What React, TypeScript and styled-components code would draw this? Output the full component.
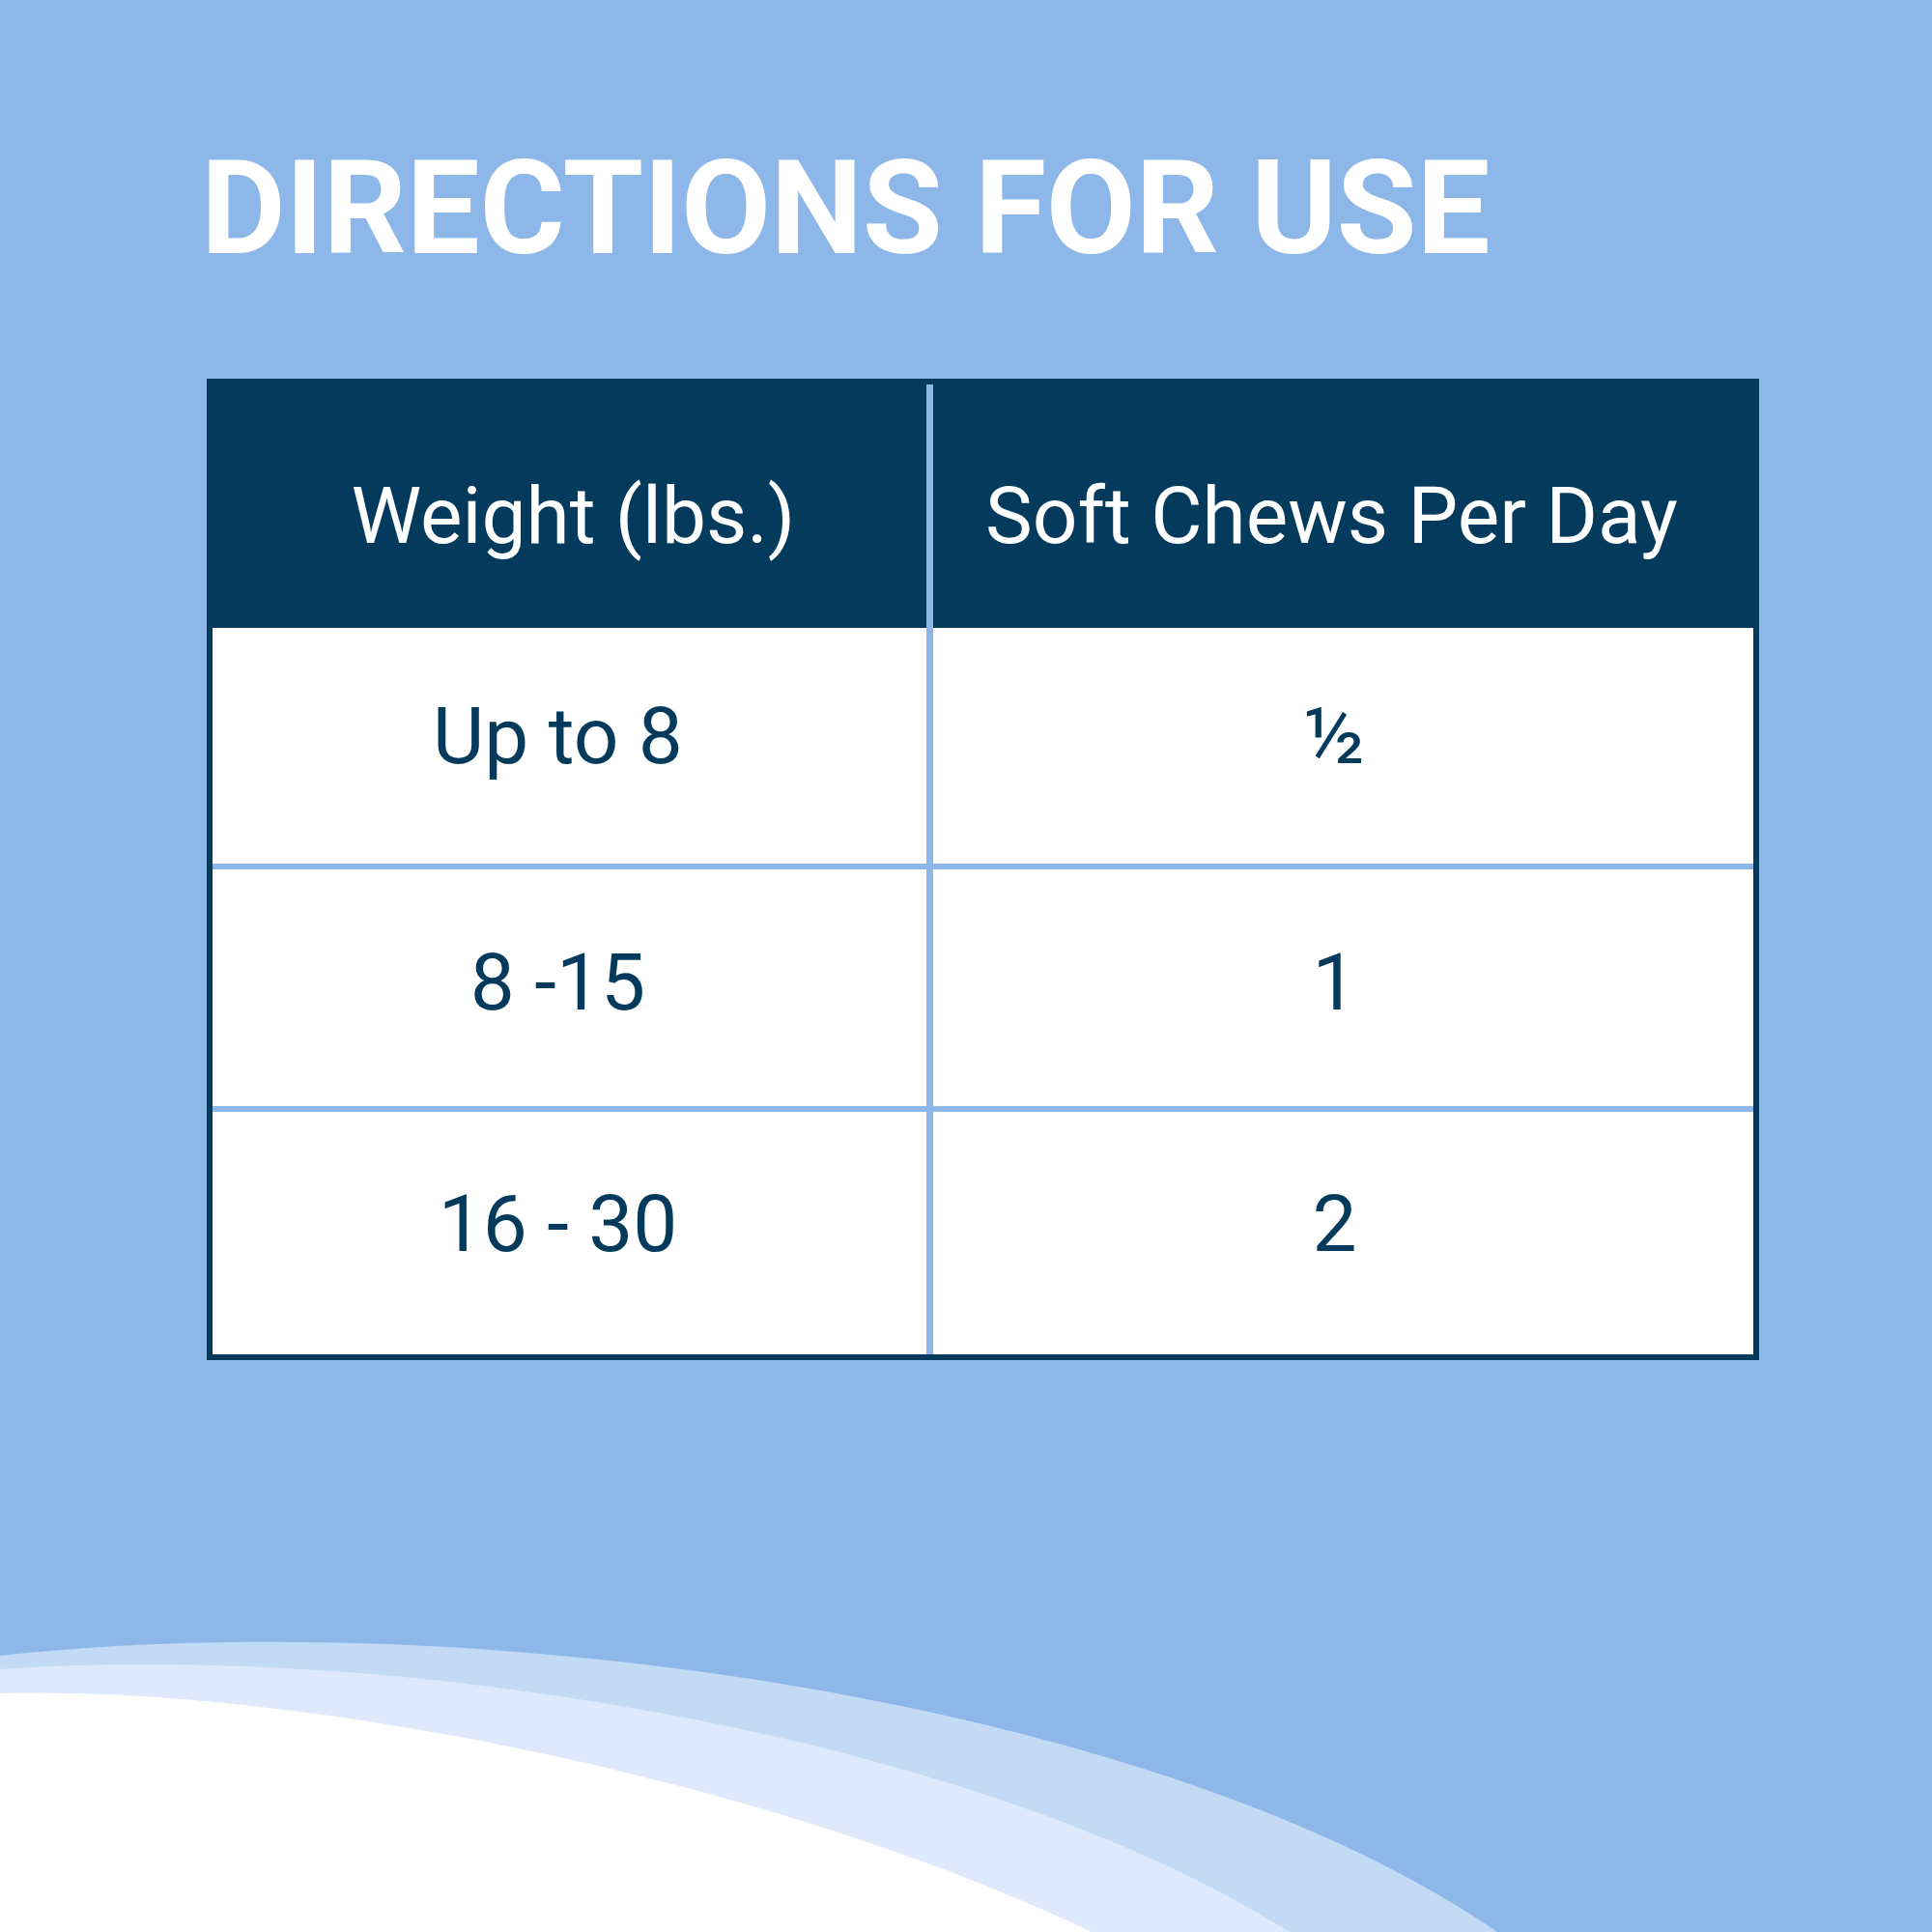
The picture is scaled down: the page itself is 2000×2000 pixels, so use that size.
import React from "react";
import styled, { createGlobalStyle } from "styled-components";

const NAVY = "#043a5c";
const SKY = "#8db7e8";

const rows = [
  { weight: "Up to 8", chews: "½", height: 244, sep: false, lift: 20 },
  { weight: "8 -15", chews: "1", height: 245, sep: true, lift: 12 },
  { weight: "16 - 30", chews: "2", height: 251, sep: true, lift: 20 },
];

const GlobalStyle = createGlobalStyle`
  body {
    margin: 0;
    background: ${SKY};
    font-family: Roboto, "Liberation Sans", sans-serif;
  }
`;

const Page = styled.div`
  position: relative;
  width: 2000px;
  height: 2000px;
  overflow: hidden;
  background: ${SKY};
  box-sizing: border-box;
  padding: 149px 0 0 214px;
`;

const Title = styled.h1`
  margin: 0 0 0 -6px;
  font-family: Roboto, "Liberation Sans", sans-serif;
  font-weight: 700;
  font-size: 135px;
  line-height: 135px;
  color: #ffffff;
  letter-spacing: -0.3px;
`;

const Table = styled.div`
  margin-top: 108px;
  width: 1607px;
  box-sizing: border-box;
  border: 6px solid ${NAVY};
  background: #ffffff;
`;

const Row = styled.div<{ $height: number; $sep?: boolean; $head?: boolean }>`
  display: grid;
  grid-template-columns: 739px 1fr;
  height: ${(p) => p.$height}px;
  border-top: ${(p) => (p.$sep ? `6px solid ${SKY}` : "none")};
  background: ${(p) => (p.$head ? NAVY : "#ffffff")};
  color: ${(p) => (p.$head ? "#ffffff" : NAVY)};
`;

const Cell = styled.div<{ $divider?: boolean; $pad: string }>`
  display: flex;
  align-items: center;
  justify-content: center;
  box-sizing: border-box;
  padding: ${(p) => p.$pad};
  border-left: ${(p) => (p.$divider ? `7px solid ${SKY}` : "none")};
  font-family: Roboto, "Liberation Sans", sans-serif;
  font-weight: 400;
  font-size: 82px;
  white-space: nowrap;
`;

const Waves = styled.svg`
  position: absolute;
  left: 0;
  bottom: 0;
  display: block;
`;

export default function App() {
  return (
    <>
      <GlobalStyle />
      <Page>
        <Title>DIRECTIONS FOR USE</Title>
        <Table>
          <Row $height={252} $head>
            <Cell $pad="20px 0 0 8px">Weight (lbs.)</Cell>
            <Cell $divider $pad="20px 24px 0 0">
              Soft Chews Per Day
            </Cell>
          </Row>
          {rows.map((r) => (
            <Row key={r.weight} $height={r.height} $sep={r.sep}>
              <Cell $pad={`0 24px ${r.lift}px 0`}>{r.weight}</Cell>
              <Cell $divider $pad={`0 18px ${r.lift}px 0`}>
                {r.chews}
              </Cell>
            </Row>
          ))}
        </Table>
        <Waves width="2000" height="350" viewBox="0 1650 2000 350">
          <path d="M0,1714 C500,1660 1200,1760 1550,2000 L0,2000 Z" fill="#c2daf4" />
          <path d="M0,1728 C400,1700 1000,1790 1335,2000 L0,2000 Z" fill="#deeafb" />
          <path d="M0,1753 C300,1745 790,1838 1130,2000 L0,2000 Z" fill="#ffffff" />
        </Waves>
      </Page>
    </>
  );
}
